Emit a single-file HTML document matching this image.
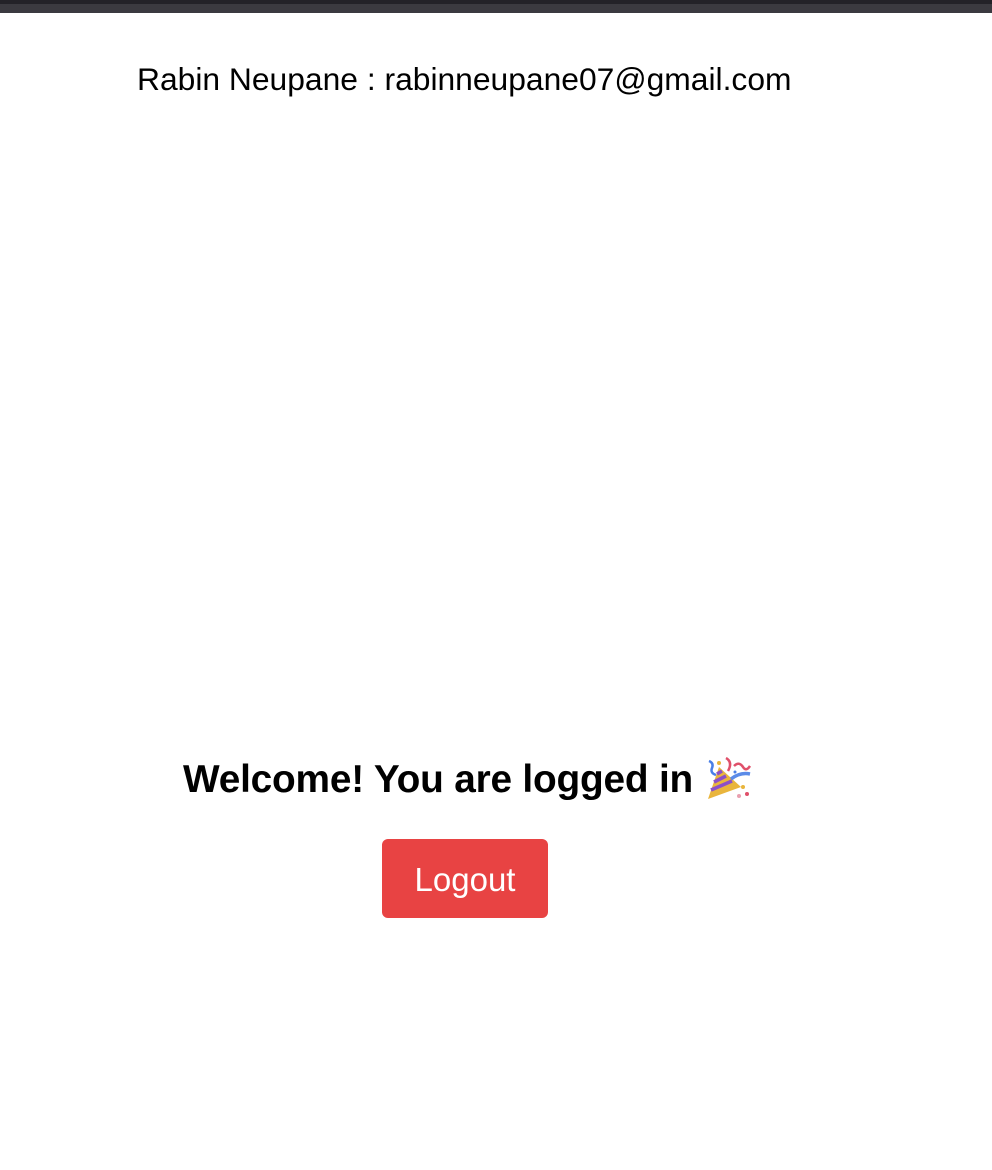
<!DOCTYPE html>
<html><head><meta charset="utf-8"><style>
body{margin:0;width:992px;height:1170px;background:#fff;position:relative;overflow:hidden;font-family:"Liberation Sans",Helvetica,Arial,sans-serif;}
.b1{position:absolute;left:0;top:0;width:992px;height:4px;background:#232228}
.b2{position:absolute;left:0;top:4px;width:992px;height:9px;background:#3b3a40}
.t{position:absolute;left:137px;top:61px;font-size:31.8px;line-height:36px;color:#000;white-space:nowrap}
.h{position:absolute;left:183px;top:757px;font-size:38.8px;line-height:46px;font-weight:bold;color:#000;white-space:nowrap;letter-spacing:-0.2px}
.e{position:absolute;left:705px;top:757px}
.btn{position:absolute;left:382px;top:839px;width:166px;height:79px;background:#e84343;border-radius:6px;color:#fff;font-size:33px;line-height:81px;text-align:center}
</style></head><body>
<div class="b1"></div><div class="b2"></div>
<div class="t">Rabin Neupane : rabinneupane07@gmail.com</div>
<div class="h">Welcome! You are logged in</div>
<svg class="e" width="46" height="44" viewBox="0 0 46 44">
<path d="M3 42 L14 10 L36 30 Z" fill="#e9b53c"/>
<path d="M6 33 L27 24 M9 25 L21 19 M12 17 L17 14" stroke="#8c4fc8" stroke-width="3.5"/>
<path d="M4 4 q5 2 3 7 q-2 5 4 7" stroke="#4a7fe6" stroke-width="2.5" fill="none"/>
<path d="M21 1 q7 4 2 13" stroke="#e0506a" stroke-width="2.5" fill="none"/>
<path d="M29 9 q5 -5 9 1 q3 5 7 -1" stroke="#e0506a" stroke-width="2.5" fill="none"/>
<path d="M26 22 q9 -7 19 -5" stroke="#5b8be8" stroke-width="3.5" fill="none"/>
<circle cx="38" cy="30" r="2" fill="#e9b53c"/><circle cx="42" cy="37" r="2" fill="#e0506a"/><circle cx="34" cy="39" r="2" fill="#e9a0b0"/><circle cx="14" cy="6" r="2" fill="#e9b53c"/><circle cx="30" cy="15" r="1.5" fill="#4a7fe6"/>
</svg>
<div class="btn">Logout</div>
</body></html>
